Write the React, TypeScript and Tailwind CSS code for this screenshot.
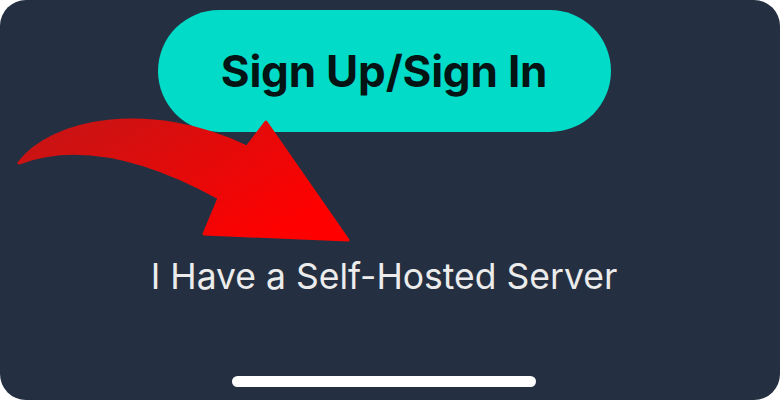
import React from 'react';

const CurvedArrow: React.FC = () => (
  <svg
    className="absolute left-0 top-0 pointer-events-none"
    width="780"
    height="400"
    viewBox="0 0 780 400"
  >
    <defs>
      <linearGradient id="arrowRed" x1="0" y1="0" x2="1" y2="0.6">
        <stop offset="0" stopColor="#c21616" />
        <stop offset="1" stopColor="#ff0000" />
      </linearGradient>
    </defs>
    <path
      d="M19 163 C 50 120, 150 100, 247 147 L 266 122 L 348 240 L 204 234 L 219 198 C 150 160, 80 140, 19 163 Z"
      fill="url(#arrowRed)"
      stroke="url(#arrowRed)"
      strokeWidth="3"
      strokeLinejoin="round"
    />
  </svg>
);

export default function App() {
  return (
    <div className="w-[780px] h-[400px] bg-white">
      <div
        className="relative w-full h-full rounded-[26px] bg-[#243041] flex flex-col items-center pr-[12px]"
        style={{ fontFamily: 'Inter, "Noto Sans", sans-serif' }}
      >
        <button className="mt-[10px] h-[122px] w-[453px] rounded-full bg-[#02dbc7] text-[#041414] text-[44px] font-bold tracking-[-0.2px]">
          Sign Up/Sign In
        </button>

        <CurvedArrow />

        <p className="mt-[125px] text-[35.5px] leading-[40px] text-[#ececec]">
          I Have a Self-Hosted Server
        </p>

        <div className="mt-auto mb-[13px] h-[11px] w-[304px] rounded-full bg-white" />
      </div>
    </div>
  );
}
